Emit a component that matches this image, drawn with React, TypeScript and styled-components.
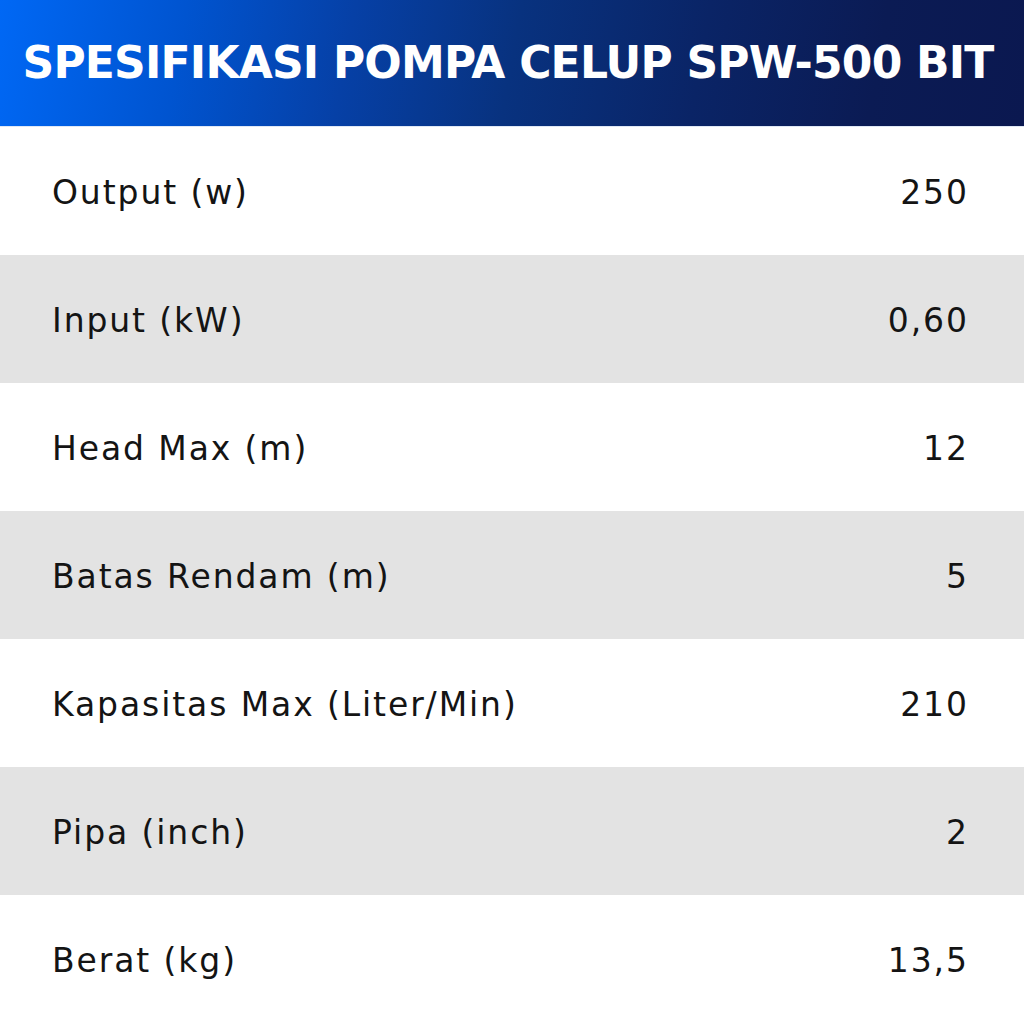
import styled, { createGlobalStyle } from "styled-components";

const specs = [
  { label: "Output (w)", value: "250" },
  { label: "Input (kW)", value: "0,60" },
  { label: "Head Max (m)", value: "12" },
  { label: "Batas Rendam (m)", value: "5" },
  { label: "Kapasitas Max (Liter/Min)", value: "210" },
  { label: "Pipa (inch)", value: "2" },
  { label: "Berat (kg)", value: "13,5" },
];

export default function App() {
  return (
    <>
      <GlobalStyle />
      <Sheet>
        <Header>
          <Title>SPESIFIKASI POMPA CELUP SPW-500 BIT</Title>
        </Header>
        {specs.map((s, i) => (
          <Row key={s.label} $shaded={i % 2 === 1}>
            <Label>{s.label}</Label>
            <Value>{s.value}</Value>
          </Row>
        ))}
      </Sheet>
    </>
  );
}

const GlobalStyle = createGlobalStyle`
  html, body {
    margin: 0;
    padding: 0;
    background: #fff;
  }
  body {
    font-family: "DejaVu Sans", "Noto Sans", sans-serif;
  }
`;

const Sheet = styled.div`
  width: 1024px;
  height: 1024px;
  display: grid;
  grid-template-rows: 127px repeat(7, 128px);
  overflow: hidden;
`;

const Header = styled.header`
  display: flex;
  align-items: center;
  justify-content: center;
  padding-right: 8px;
  background: linear-gradient(100deg, #0068f5 0%, #0054d0 18%, #0640a6 34%, #08327f 50%, #0a2466 68%, #0b1b54 85%, #0b1850 100%);
  border-bottom: 1px solid #dfe8f5;
`;

const Title = styled.h1`
  margin: 0 0 2px;
  color: #fff;
  font-size: 44px;
  font-weight: 700;
  letter-spacing: -0.8px;
  white-space: nowrap;
`;

const Row = styled.div<{ $shaded: boolean }>`
  display: flex;
  align-items: center;
  justify-content: space-between;
  padding: 2px 57px 0 52px;
  background: ${(p) => (p.$shaded ? "#e3e3e3" : "#ffffff")};
  color: #141414;
  font-size: 33px;
  font-weight: 400;
  letter-spacing: 1.9px;
`;

const Label = styled.span`
  white-space: nowrap;
`;

const Value = styled.span`
  white-space: nowrap;
  margin-right: -1.9px;
`;
